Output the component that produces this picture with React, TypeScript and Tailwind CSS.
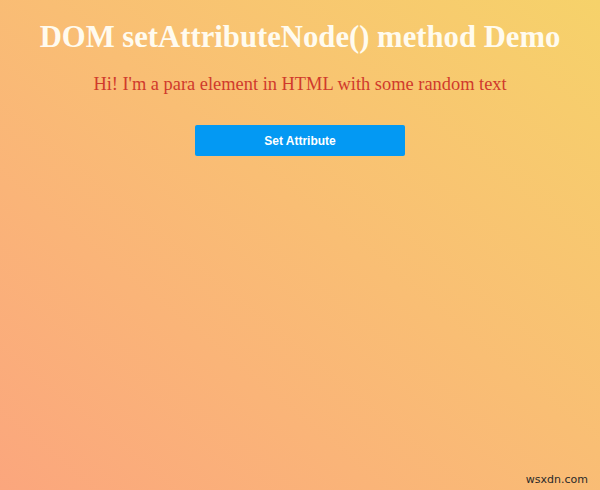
export default function App() {
  return (
    <div className="relative w-[600px] h-[490px] overflow-hidden bg-linear-to-tr from-[#fba67d] to-[#f6d26a]">
      <div className="flex flex-col items-center pt-[19px]">
        <h1 className="text-[30.7px] leading-[36px] font-bold text-[#fffbef] font-['Liberation_Serif',serif]">
          DOM setAttributeNode() method Demo
        </h1>
        <p className="mt-[18px] text-[18.4px] leading-[22px] text-[#d03a2c] font-['Liberation_Serif',serif]">
          Hi! I'm a para element in HTML with some random text
        </p>
        <button className="mt-[30px] w-[210px] h-[31px] rounded-[2px] bg-[#0399f3] text-white text-[12px] font-bold font-['Liberation_Sans',sans-serif]">
          Set Attribute
        </button>
      </div>
      <div className="absolute right-[12px] bottom-[3px] text-[11px] leading-[14px] text-[#2a2a2a] font-['DejaVu_Sans',sans-serif]">
        wsxdn.com
      </div>
    </div>
  );
}
